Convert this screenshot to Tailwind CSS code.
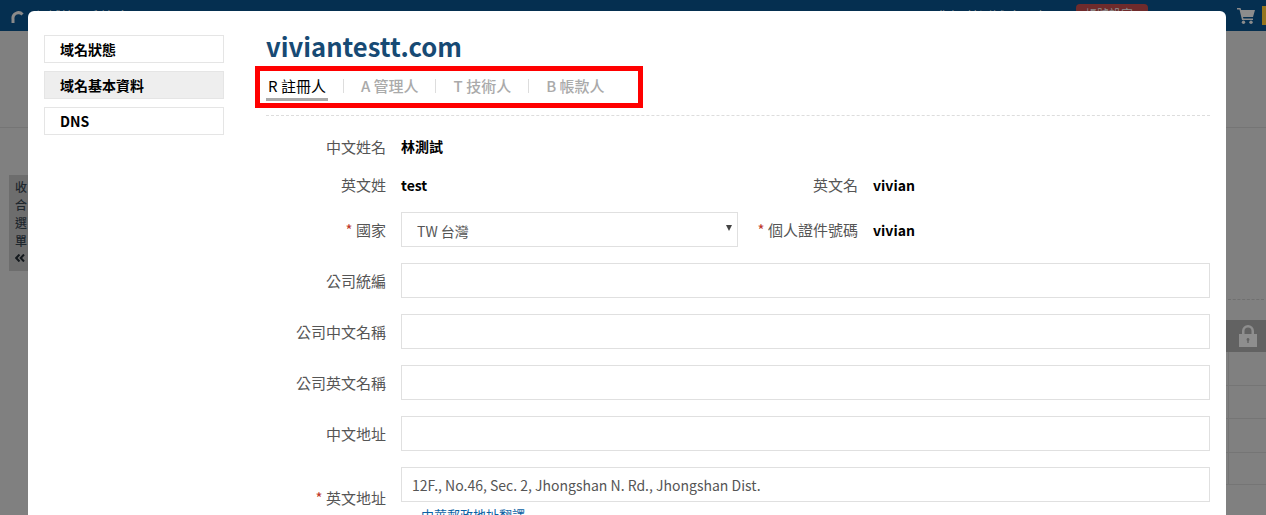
<!DOCTYPE html>
<html lang="zh-Hant">
<head>
  <meta charset="UTF-8" />
  <title>viviantestt.com</title>
  <script src="https://cdn.jsdelivr.net/npm/@tailwindcss/browser@4"></script>
</head>
<body class="relative h-[515px] w-[1266px] overflow-hidden bg-[#808080] font-['Noto_Sans_CJK_TC','Noto_Sans',sans-serif] text-[15px] text-[#555]">

  <!-- page behind the overlay -->
  <div class="flex h-[31px] items-start justify-between bg-[#052f50]">
    <div class="flex items-start">
      <svg class="ml-[9px] mt-[10px] h-[14px] w-[16px] text-[#8a8a8a]" viewBox="0 0 16 14" fill="none" stroke="currentColor" stroke-width="3"><path d="M4 13V9a5.500 5.500 0 0 1 9.500-4.500"/></svg>
      <span class="ml-[10px] mt-[7px] text-[13px] leading-[18px] text-[#8a8f94]">網域管理系統 會員</span>
    </div>
    <div class="flex items-start">
      <span class="mr-[16px] mt-[7px] text-[13px] leading-[18px] text-[#8a8f94]">您好 林測試 會員專區</span>
      <div class="mr-[89px] mt-[4px] h-[8px] w-[72px] rounded-t-sm bg-[#6f2b2c] pl-[9px] text-[12px] leading-[20px] text-[#8f8f8f]">帳號設定</div>
      <svg class="mt-[8px] h-[16px] w-[18px] text-[#8c8c8c]" viewBox="0 0 18 16" fill="currentColor"><path d="M0 0h3.500l.6 2H18l-2 7H6l.4 1.500H16V12H5L2.500 1.600H0z"/><circle cx="6.500" cy="14.200" r="1.700"/><circle cx="14" cy="14.200" r="1.700"/></svg>
      <div class="ml-[7px] mt-[6px] h-[19px] w-[4px] bg-[#94751f]"></div>
    </div>
  </div>
  <div class="mt-[96px] border-t border-[#757575]"></div>

  <div class="absolute left-[9px] top-[175px] flex h-[96px] w-[19px] flex-col items-start bg-[#6d6d6d] pl-[6px] pt-[3px] text-[12px] font-medium leading-[18px] text-[#1f272d]">
    <span>收</span><span>合</span><span>選</span><span>單</span>
    <svg class="mt-[4px] h-[8px] w-[10px] text-[#14191d]" viewBox="0 0 10 8" fill="none" stroke="currentColor" stroke-width="2"><path d="M4.500 .5 1.200 4l3.300 3.500M9 .5 5.700 4 9 7.500"/></svg>
  </div>

  <div class="absolute left-[1228px] top-[299px] w-[36px] border-t border-dashed border-[#707070]"></div>
  <div class="absolute left-[1228px] top-[320px] h-[164px] w-px bg-[#757575]"></div>
  <div class="absolute left-[1226px] top-[320px] flex h-[32px] w-[40px] items-center bg-[#626262] pl-[13px]">
    <svg class="h-[24px] w-[18px] text-[#8e8e8e]" viewBox="0 0 18 24" fill="currentColor"><path fill-rule="evenodd" d="M3 10V7a6 6 0 0 1 12 0v3h3v13H0V10zm2.500 0h7V7a3.500 3.500 0 0 0-7 0zM9 14a1.500 1.500 0 0 0-.7 2.800V19h1.400v-2.200A1.500 1.500 0 0 0 9 14z"/></svg>
  </div>
  <div class="absolute left-[1226px] top-[385px] h-px w-[40px] bg-[#757575]"></div>
  <div class="absolute left-[1226px] top-[418px] h-px w-[40px] bg-[#757575]"></div>
  <div class="absolute left-[1226px] top-[452px] h-px w-[40px] bg-[#757575]"></div>
  <div class="absolute left-[1226px] top-[484px] h-px w-[40px] bg-[#757575]"></div>

  <!-- modal -->
  <div class="absolute left-[28px] top-[11px] flex h-[520px] w-[1198px] rounded-t-md bg-white pl-4 pr-4 pt-6">
    <div class="flex w-[180px] shrink-0 flex-col gap-2 text-[14px] font-bold leading-[26px] text-black">
      <a class="h-[28px] border border-[#e5e5e5] pl-[15px]">域名狀態</a>
      <a class="h-[28px] border border-[#e5e5e5] bg-[#eeeeee] pl-[15px]">域名基本資料</a>
      <a class="h-[28px] border border-[#e5e5e5] pl-[15px]">DNS</a>
    </div>

    <div class="ml-[42px] w-[944px]">
      <h1 class="-mt-[2px] h-[33px] text-[25.6px] font-bold leading-[26px] text-[#174a74]">viviantestt.com</h1>

      <!-- red box is an annotation on the tabs -->
      <div class="-ml-[11px] flex h-[42px] w-[388px] items-center border-[5px] border-[#ff0000] pb-[2px] pl-[6px] text-[15px] font-medium text-[#aaaaaa]">
        <span class="mt-[4px] h-[26px] border-b-[3px] border-[#aaaaaa] px-[2px] font-normal leading-[22px] text-black">R 註冊人</span>
        <span class="ml-[15px] mr-[17px] h-[14px] w-px bg-[#dddddd]"></span>
        <span>A 管理人</span>
        <span class="ml-[16px] mr-[18px] h-[14px] w-px bg-[#dddddd]"></span>
        <span>T 技術人</span>
        <span class="ml-[17px] mr-[17px] h-[14px] w-px bg-[#dddddd]"></span>
        <span>B 帳款人</span>
      </div>
      <div class="mt-[7px] border-t border-dashed border-[#dddddd]"></div>

      <div class="mt-[21px] flex h-[20px] items-center">
        <label class="w-[120px] text-right">中文姓名</label>
        <span class="-mt-[2px] ml-[15px] text-[14px] font-bold text-black">林測試</span>
      </div>
      <div class="mt-[18px] flex h-[20px] items-center">
        <label class="w-[120px] text-right">英文姓</label>
        <span class="ml-[15px] w-[337px] text-[14px] font-bold text-black">test</span>
        <label class="w-[120px] text-right">英文名</label>
        <span class="ml-[15px] text-[14px] font-bold text-black">vivian</span>
      </div>
      <div class="mt-[17px] flex h-[35px] items-center">
        <label class="w-[120px] pt-[2px] text-right"><span class="text-[#c0392b]">*</span> 國家</label>
        <div class="relative ml-[15px] flex h-[35px] w-[337px] items-center border border-[#e0e0e0] pl-[15px] pt-[4px] text-[14px] text-[#555]">
          TW 台灣
          <span class="absolute right-[5px] top-[12px] h-0 w-0 border-x-[3.500px] border-t-[6px] border-x-transparent border-t-[#444]"></span>
        </div>
        <label class="w-[120px] pt-[2px] text-right"><span class="text-[#c0392b]">*</span> 個人證件號碼</label>
        <span class="ml-[15px] pt-[2px] text-[14px] font-bold text-black">vivian</span>
      </div>

      <div class="mt-4 flex h-[35px] items-center">
        <label class="w-[120px] pt-[2px] text-right">公司統編</label>
        <div class="ml-[15px] h-[35px] flex-1 border border-[#e0e0e0]"></div>
      </div>
      <div class="mt-4 flex h-[35px] items-center">
        <label class="w-[120px] pt-[2px] text-right">公司中文名稱</label>
        <div class="ml-[15px] h-[35px] flex-1 border border-[#e0e0e0]"></div>
      </div>
      <div class="mt-4 flex h-[35px] items-center">
        <label class="w-[120px] pt-[2px] text-right">公司英文名稱</label>
        <div class="ml-[15px] h-[35px] flex-1 border border-[#e0e0e0]"></div>
      </div>
      <div class="mt-4 flex h-[35px] items-center">
        <label class="w-[120px] pt-[2px] text-right">中文地址</label>
        <div class="ml-[15px] h-[35px] flex-1 border border-[#e0e0e0]"></div>
      </div>
      <div class="mt-4 flex items-start">
        <label class="w-[120px] pt-[20px] text-right"><span class="text-[#c0392b]">*</span> 英文地址</label>
        <div class="ml-[15px] flex-1">
          <div class="flex h-[35px] items-center border border-[#e0e0e0] pl-[10px] pt-[2px] text-[14px] text-[#555]">12F., No.46, Sec. 2, Jhongshan N. Rd., Jhongshan Dist.</div>
          <a class="ml-[20px] mt-[3px] block text-[13px] text-[#0b62a4]">中華郵政地址翻譯</a>
        </div>
      </div>
    </div>
  </div>
</body>
</html>
